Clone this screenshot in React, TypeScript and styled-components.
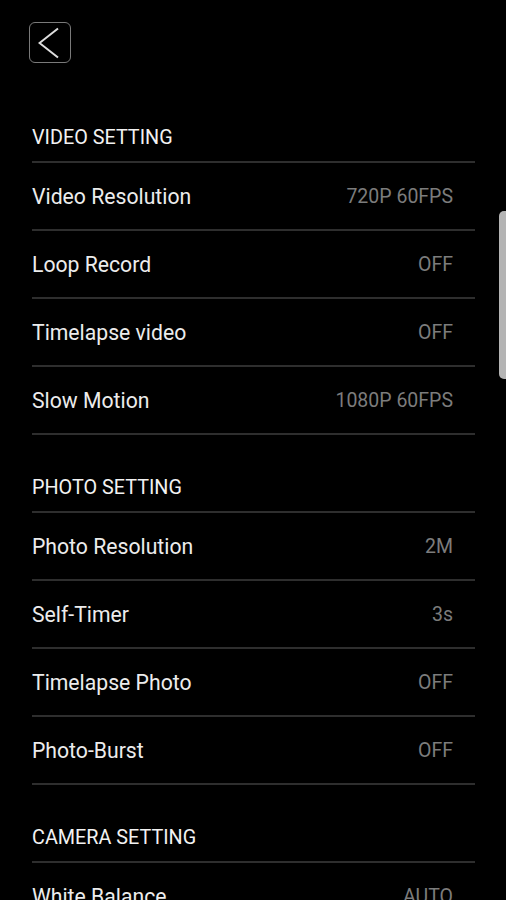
import styled, { createGlobalStyle } from 'styled-components';

const GlobalStyle = createGlobalStyle`
    html, body {
        margin: 0;
        padding: 0;
        background: #000;
    }
    body {
        font-family: Roboto, "Noto Sans", sans-serif;
        color: #ececec;
        overflow: hidden;
    }
`;

const Screen = styled.div`
    position: relative;
    width: 506px;
    height: 900px;
    background: #000;
    overflow: hidden;
`;

const TopBar = styled.div`
    padding: 22px 0 0 29px;
    height: 85px;
    box-sizing: border-box;
`;

const BackButton = styled.button`
    width: 42px;
    height: 41px;
    padding: 0;
    border: 1.5px solid #7a7a7a;
    border-radius: 6px;
    background: transparent;
    display: flex;
    align-items: center;
    justify-content: center;
    cursor: pointer;
`;

const List = styled.div`
    padding: 0 31px 0 32px;
`;

const SectionHeader = styled.div`
    height: 76px;
    display: flex;
    align-items: flex-end;
    border-bottom: 2px solid #2e2e2e;
`;

const SectionTitle = styled.span`
    display: block;
    line-height: 24px;
    margin-bottom: 11px;
    font-size: 19.8px;
    color: #f2f2f2;
`;

const Row = styled.div`
    height: 66px;
    display: flex;
    align-items: center;
    justify-content: space-between;
    padding-right: 22px;
    border-bottom: 2px solid #2e2e2e;
`;

const Label = styled.span`
    font-size: 21.2px;
    color: #ececec;
`;

const Value = styled.span`
    font-size: 19.5px;
    color: #7c7c7c;
`;

const ScrollThumb = styled.div`
    position: absolute;
    right: 0;
    top: 211px;
    width: 7px;
    height: 168px;
    background: #b4b4b4;
    border-radius: 5px 0 0 5px;
`;

const sections = [
    {
        title: 'VIDEO SETTING',
        items: [
            ['Video Resolution', '720P 60FPS'],
            ['Loop Record', 'OFF'],
            ['Timelapse video', 'OFF'],
            ['Slow Motion', '1080P 60FPS'],
        ],
    },
    {
        title: 'PHOTO SETTING',
        items: [
            ['Photo Resolution', '2M'],
            ['Self-Timer', '3s'],
            ['Timelapse Photo', 'OFF'],
            ['Photo-Burst', 'OFF'],
        ],
    },
    {
        title: 'CAMERA SETTING',
        items: [['White Balance', 'AUTO']],
    },
];

export default function App() {
    return (
        <Screen>
            <GlobalStyle />
            <TopBar>
                <BackButton aria-label="Back">
                    <svg width="24" height="32" viewBox="0 0 24 32">
                        <path d="M20 1.5 L1.5 16 L20 30.5" fill="none" stroke="#dedede" strokeWidth="2" />
                    </svg>
                </BackButton>
            </TopBar>
            <List>
                {sections.map((s) => (
                    <div key={s.title}>
                        <SectionHeader>
                            <SectionTitle>{s.title}</SectionTitle>
                        </SectionHeader>
                        {s.items.map(([label, value]) => (
                            <Row key={label}>
                                <Label>{label}</Label>
                                <Value>{value}</Value>
                            </Row>
                        ))}
                    </div>
                ))}
            </List>
            <ScrollThumb />
        </Screen>
    );
}
